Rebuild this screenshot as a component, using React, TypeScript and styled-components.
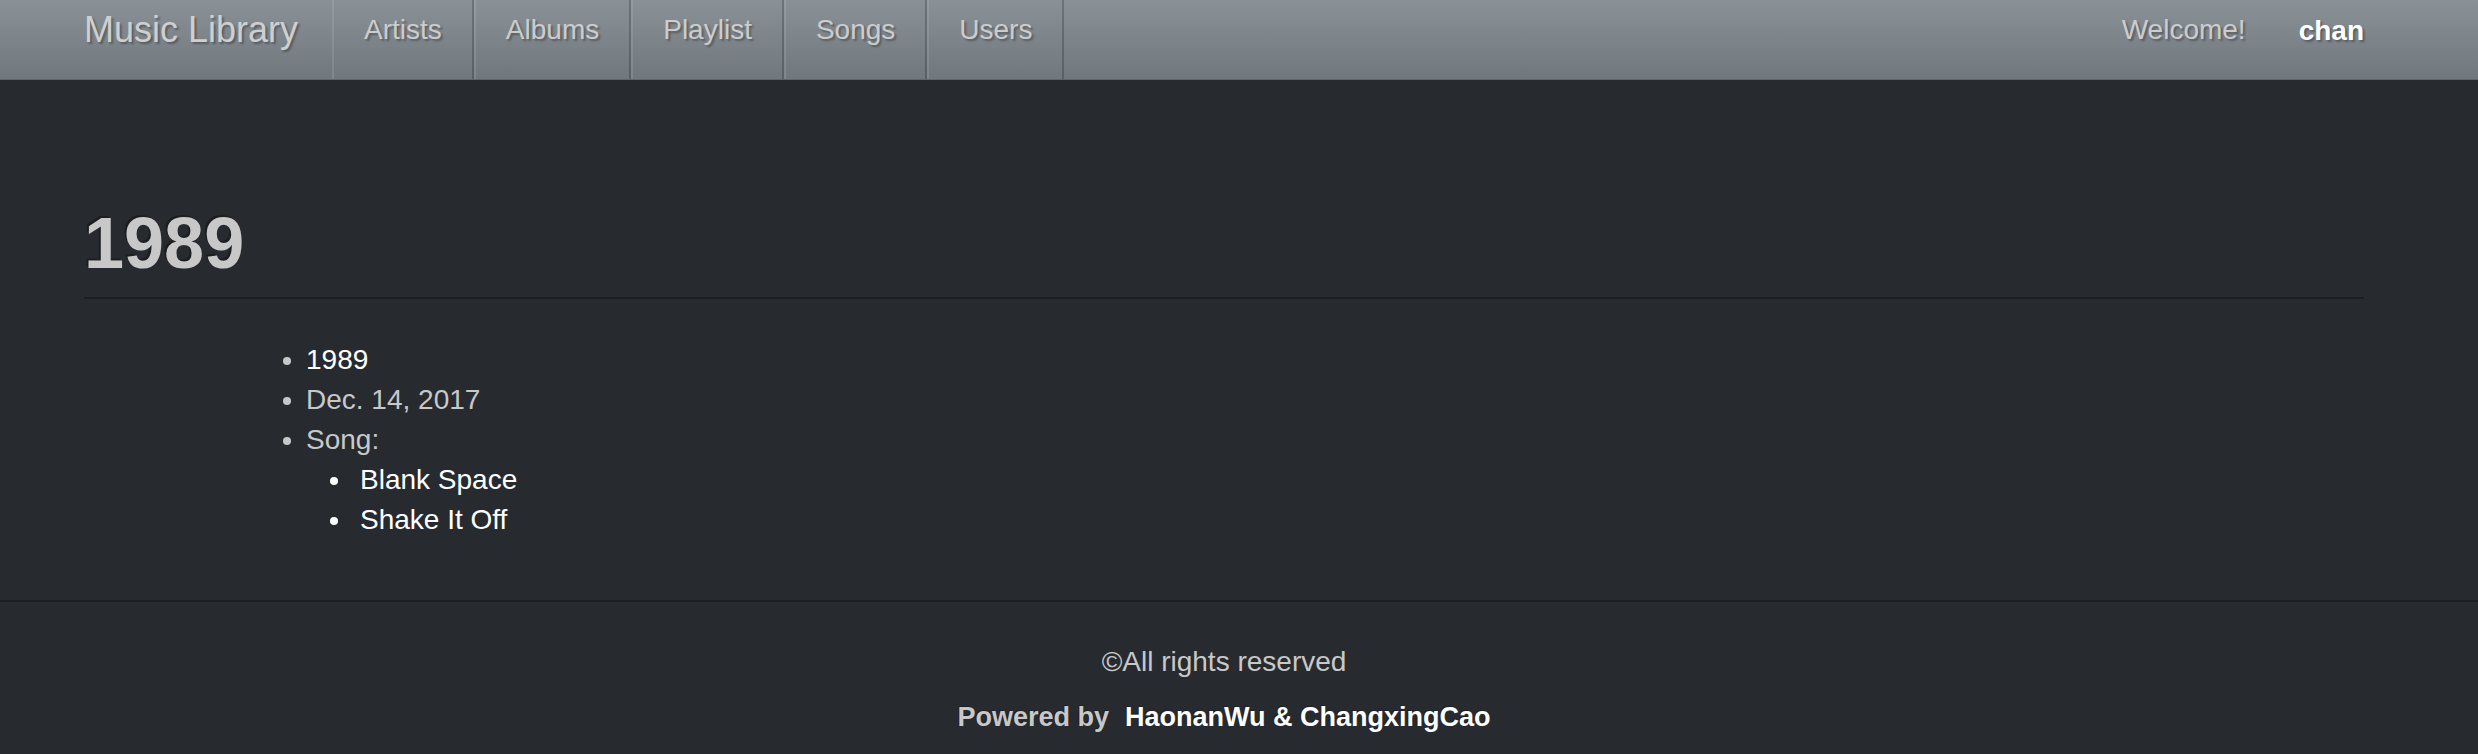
import React from "react";
import styled, { createGlobalStyle } from "styled-components";

const GlobalStyle = createGlobalStyle`
  html, body {
    margin: 0;
    padding: 0;
    background: #272b30;
  }
  body {
    font-family: "Liberation Sans", Arial, Helvetica, sans-serif;
    font-size: 28px;
    line-height: 40px;
    color: #c8c8c8;
  }
  * { box-sizing: border-box; }
`;

const Navbar = styled.header`
  height: 80px;
  background-image: linear-gradient(#8a9196, #7a8288 60%, #70787d);
  border-bottom: 1px solid #5f666b;
`;

const Shell = styled.div`
  padding-right: 30px;
`;

const NavInner = styled.nav`
  width: 2340px;
  margin: 0 auto;
  display: flex;
  align-items: stretch;
  height: 79px;
`;

const Brand = styled.a`
  display: block;
  padding: 10px 34px 0 30px;
  font-size: 36px;
  line-height: 40px;
  color: #cfcfcf;
  text-decoration: none;
  text-shadow: 2px 2px 2px rgba(0, 0, 0, 0.3);
`;

const NavList = styled.ul`
  display: flex;
  list-style: none;
  margin: 0;
  padding: 0;
`;

const NavItem = styled.li`
  display: flex;
`;

const NavLink = styled.a`
  display: block;
  padding: 10px 30px 0;
  line-height: 40px;
  font-size: 28px;
  color: #cccccc;
  text-decoration: none;
  text-shadow: 2px 2px 2px rgba(0, 0, 0, 0.3);
  border-left: 2px solid rgba(255, 255, 255, 0.1);
  border-right: 2px solid rgba(0, 0, 0, 0.2);
`;

const RightGroup = styled.div`
  margin-left: auto;
  display: flex;
  align-items: flex-start;
`;

const Welcome = styled.span`
  padding: 10px 23px 0 0;
  line-height: 40px;
  color: #cccccc;
  text-shadow: 2px 2px 2px rgba(0, 0, 0, 0.3);
`;

const UserLink = styled.a`
  padding: 11px 30px 0;
  line-height: 40px;
  font-weight: bold;
  color: #ffffff;
  text-decoration: none;
  text-shadow: 2px 2px 2px rgba(0, 0, 0, 0.3);
`;

const Main = styled.main`
  width: 2340px;
  margin: 0 auto;
  padding: 124px 30px 60px;
`;

const PageHeader = styled.div`
  padding-bottom: 14px;
  border-bottom: 2px solid #1c1e22;
`;

const Title = styled.h1`
  margin: 0;
  font-size: 72px;
  line-height: 79px;
  font-weight: bold;
  color: #c8c8c8;
  text-shadow: -2px -2px 0 rgba(0, 0, 0, 0.3);
`;

const List = styled.ul<{ $nested?: boolean }>`
  list-style-type: disc;
  margin: ${(p) => (p.$nested ? "0" : "41px 0 0")};
  padding-left: ${(p) => (p.$nested ? "47px" : "222px")};
`;

const Item = styled.li<{ $light?: boolean }>`
  line-height: 40px;
  padding-left: ${(p) => (p.$light ? "7px" : "0")};
  color: ${(p) => (p.$light ? "#ffffff" : "#c8c8c8")};
`;

const Link = styled.a`
  color: #ffffff;
  text-decoration: none;
`;

const Footer = styled.footer`
  border-top: 2px solid #1c1e22;
  padding: 40px 30px 17px 0;
  text-align: center;
`;

const FooterLine = styled.p<{ $strong?: boolean }>`
  margin: ${(p) => (p.$strong ? "15px 0 0" : "0")};
  line-height: 40px;
  font-size: ${(p) => (p.$strong ? "27px" : "28px")};
  font-weight: ${(p) => (p.$strong ? "bold" : "normal")};
  color: #c8c8c8;
  text-shadow: ${(p) => (p.$strong ? "-1px -1px 0 rgba(0,0,0,0.3)" : "none")};
`;

const Authors = styled.span`
  margin-left: 16px;
  color: #ffffff;
`;

const navItems = ["Artists", "Albums", "Playlist", "Songs", "Users"];

export default function App() {
  return (
    <>
      <GlobalStyle />
      <Navbar>
        <Shell>
          <NavInner>
            <Brand href="#">Music Library</Brand>
            <NavList>
              {navItems.map((n) => (
                <NavItem key={n}>
                  <NavLink href="#">{n}</NavLink>
                </NavItem>
              ))}
            </NavList>
            <RightGroup>
              <Welcome>Welcome!</Welcome>
              <UserLink href="#">chan</UserLink>
            </RightGroup>
          </NavInner>
        </Shell>
      </Navbar>
      <Shell>
        <Main>
          <PageHeader>
            <Title>1989</Title>
          </PageHeader>
          <List>
            <Item>
              <Link href="#">1989</Link>
            </Item>
            <Item>Dec. 14, 2017</Item>
            <Item>
              Song:
              <List $nested>
                <Item $light>
                  <Link href="#">Blank Space</Link>
                </Item>
                <Item $light>
                  <Link href="#">Shake It Off</Link>
                </Item>
              </List>
            </Item>
          </List>
        </Main>
      </Shell>
      <Footer>
        <FooterLine>©All rights reserved</FooterLine>
        <FooterLine $strong>
          Powered by<Authors>HaonanWu &amp; ChangxingCao</Authors>
        </FooterLine>
      </Footer>
    </>
  );
}
